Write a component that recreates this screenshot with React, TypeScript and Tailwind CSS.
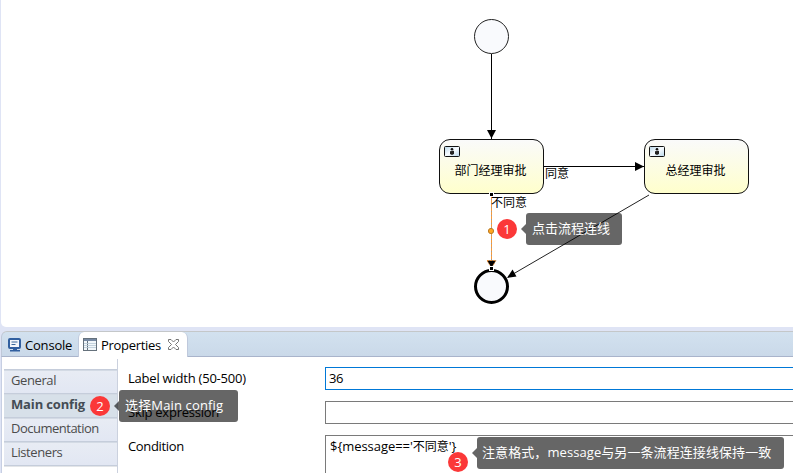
import React from 'react';

const latin = "font-['Open_Sans','Noto_Sans_CJK_SC',sans-serif]";
const cjk = "font-['Noto_Sans_CJK_SC',sans-serif]";

function UserIcon() {
  return (
    <svg width="16" height="11" viewBox="0 0 16 11" className="absolute left-[4px] top-[6px]">
      <defs>
        <linearGradient id="ic" x1="0" x2="1" y1="0" y2="1">
          <stop offset="0" stopColor="#b7d5e8" />
          <stop offset=".5" stopColor="#f8fcff" />
          <stop offset="1" stopColor="#b7d5e8" />
        </linearGradient>
      </defs>
      <rect x=".5" y=".5" width="15" height="10" rx="1" fill="url(#ic)" stroke="#111" />
      <circle cx="8" cy="3.3" r="1.3" fill="#111" />
      <path d="M6 5.3L10 4.8V7.5L9 8.8H7L6 7.5Z" fill="#222" />
    </svg>
  );
}

function Task({ name, place }: { name: string; place: string }) {
  return (
    <div
      className={`absolute top-[139px] h-[55px] w-[105px] rounded-[11px] border border-[#111] bg-linear-to-b from-[#fafafa] to-[#ffffcc] ${place}`}
    >
      <UserIcon />
      <div className={`pt-[21px] pr-[2px] text-center text-[12px] leading-[18px] text-black ${cjk}`}>{name}</div>
    </div>
  );
}

function Badge({ n, place }: { n: number; place: string }) {
  return (
    <div
      className={`absolute flex h-5 w-5 items-center justify-center rounded-full bg-[#fb3838] text-[13px] leading-none text-white ${latin} ${place}`}
    >
      {n}
    </div>
  );
}

function Tip({ place, children }: { place: string; children: React.ReactNode }) {
  return (
    <div className={`absolute h-8 rounded-[3px] bg-black/60 text-[13px] leading-[30px] whitespace-nowrap text-white ${latin} ${place}`}>
      <svg width="5" height="10" viewBox="0 0 5 10" className="absolute top-[11px] -left-[5px]">
        <path d="M5 0V10L0 5Z" fill="#000" fillOpacity=".6" />
      </svg>
      {children}
    </div>
  );
}

function Diagram() {
  return (
    <div className="relative ml-px h-[327px] shrink-0 overflow-hidden rounded-bl-[5px] bg-white">
      <div className="absolute top-0 -left-px h-[327px] w-[793px]">
        <svg width="793" height="327" className="absolute inset-0">
          <circle cx="491.5" cy="36.5" r="17" fill="#f9fafd" stroke="#222" />
          <path d="M491.5 54V139M544 166.5H644" stroke="#000" />
          <path d="M487 130H496L491.5 138.5ZM635 162V171L644 166.5Z" fill="#000" />
          <path d="M649 195L508 277" stroke="#222" fill="none" />
          <path d="M507 278L512.5 269.5L516.5 276.5Z" fill="#000" />
          <path d="M491.5 196V263" stroke="#a89c90" />
          <path d="M491.5 196V263" stroke="#f59a3c" strokeDasharray="3 1" />
          <path d="M487 260.500H496L491.5 268Z" fill="#000" stroke="#f28c28" strokeDasharray="2 1" strokeWidth=".8" />
          <circle cx="491.500" cy="286.500" r="16" fill="#f9fafd" stroke="#000" strokeWidth="3" />
          <rect x="489.500" y="266.500" width="4" height="4" fill="#000" stroke="#fff" />
          <circle cx="491" cy="231" r="2.600" fill="#ffa620" stroke="#ba7a24" />
        </svg>
        <Task name="部门经理审批" place="left-[439px]" />
        <Task name="总经理审批" place="left-[644px]" />
        <div className="absolute top-[192px] left-[489px] h-[5px] w-[5px] border border-white bg-black" />
        <div className={`absolute top-[164px] left-[545px] text-[12px] leading-[18px] ${cjk}`}>同意</div>
        <div className={`absolute top-[193px] left-[491px] text-[12px] leading-[18px] ${cjk}`}>不同意</div>
        <Badge n={1} place="left-[497px] top-[219px]" />
        <Tip place="left-[526px] top-[213px] w-[96px] pl-[6px]">点击流程连线</Tip>
      </div>
    </div>
  );
}

function TabBar() {
  return (
    <div className="flex h-[26px] shrink-0 rounded-tl-[6px] border-t border-b border-l border-t-[#c4c7c9] border-b-[#a9b4cb] border-l-[#bfc8d8] bg-linear-to-b from-[#d2e1ef] to-[#cad9e9]">
      <div className="flex h-[25px] w-[76px] pt-[6px] pl-[6px]">
        <svg width="14" height="14" viewBox="0 0 14 14">
          <rect x="1" y="1" width="11" height="9" rx="1" fill="#f4f7fb" stroke="#315f9f" strokeWidth="2" />
          <path d="M3.500 4H9.500M3.500 6.500H7.500" stroke="#3b689c" />
          <path d="M5 11H9V12H12V13.500H2V12H5Z" fill="#315f9f" />
        </svg>
        <span className="-mt-px ml-[3px] h-[16px] text-[13px] leading-[16px] tracking-[-0.2px]">Console</span>
      </div>
      <div className="flex h-[25px] w-[110px] rounded-t-[6px] border-x border-[#bfc9dc] bg-white pt-[6px] pl-[4px]">
        <svg width="14" height="14" viewBox="0 0 14 14">
          <rect x=".5" y=".5" width="13" height="12" fill="#f2f7fa" stroke="#65717c" />
          <path d="M1 2H13" stroke="#7689a3" strokeWidth="2" />
          <path d="M4.500 3V12" stroke="#65717c" />
          <path d="M1 5.500H13M1 7.500H13M1 9.500H13" stroke="#b6c8d5" strokeWidth=".8" />
        </svg>
        <span className="-mt-px ml-[4px] w-[61px] text-[13px] leading-[16px] tracking-[-0.3px]">Properties</span>
        <svg width="11" height="11" viewBox="0 0 11 11" className="mt-[1px] ml-[6px]">
          <path d="M.5.5H3L5.500 3L8 .5H10.500V2.500L7.500 5.500L10.500 8.500V10.500H8L5.500 8L3 10.500H.5V8.500L3.500 5.500L.5 2.500V.5Z" fill="#fff" stroke="#666" strokeWidth=".9" />
        </svg>
      </div>
    </div>
  );
}

function SideItem({ label, active, track }: { label: string; active?: boolean; track: string }) {
  return (
    <div
      className={`h-6 border-t border-[#c5cddb] pl-[7px] text-[13px] leading-[20px] shadow-[inset_0_1px_0_#d3dae4] ${track} ${
        active ? 'bg-[#d7e0e9] font-bold text-[#444c55]' : 'bg-linear-to-b from-[#e8ecf4] to-[#e2e7f3] text-[#4c4c4c]'
      }`}
    >
      {label}
    </div>
  );
}

function Field({ label, value, height, border, track }: { label: string; value: string; height: string; border: string; track: string }) {
  return (
    <div className={`flex items-start ${height}`}>
      <div className={`w-[197px] shrink-0 pt-[2px] text-[13px] leading-[18px] text-black ${track}`}>{label}</div>
      <div className={`h-[23px] grow border border-r-0 pl-[3px] text-[13px] leading-[21px] tracking-[-0.5px] ${border}`}>{value}</div>
    </div>
  );
}

function Properties() {
  return (
    <div className="flex h-[116px] border-l border-[#c7cfe3] bg-white">
      <div className="ml-[2px] w-[113px] pt-[12px]">
        <SideItem label="General" track="tracking-[-0.4px]" />
        <SideItem label="Main config" active track="tracking-[-0.15px]" />
        <SideItem label="Documentation" track="tracking-[-0.5px]" />
        <SideItem label="Listeners" track="tracking-[-0.4px]" />
        <div className="h-[2px] border-t border-[#c5cddb] bg-[#e3e5e8]" />
      </div>
      <div className="mt-[2px] flex grow flex-col border-l border-[#cbd1de] pt-[8px] pl-[10px]">
        <Field label="Label width (50-500)" value="36" height="h-[34px]" border="border-[#0078d7]" track="tracking-[-0.22px]" />
        <Field label="Skip expression" value="" height="h-[34px]" border="border-[#7a7a7a]" track="tracking-[-0.25px]" />
        <div className="flex grow">
          <div className="w-[197px] shrink-0 pt-[2px] text-[13px] leading-[18px] tracking-[-0.35px]">Condition</div>
          <div className="grow border-t border-l border-[#7a7a7a] pt-[1px] pl-[4px] text-[13px] leading-[18px]">
            <span className="tracking-[-0.05px]">{"${message=='"}</span>
            <span className="text-[12px]">不同意</span>
            {"'}"}
          </div>
        </div>
      </div>
    </div>
  );
}

export default function App() {
  return (
    <div className={`relative flex h-[473px] w-[793px] flex-col overflow-hidden bg-[#dfe4f5] text-black ${latin}`}>
      <Diagram />
      <div className="mt-1 ml-px flex flex-col">
        <TabBar />
        <Properties />
      </div>
      <Badge n={2} place="left-[90px] top-[396px]" />
      <Tip place="left-[119px] top-[390px] w-[119px] pl-[6px] tracking-[0.15px]">选择Main config</Tip>
      <Badge n={3} place="left-[448px] top-[452px]" />
      <Tip place="left-[477px] top-[437px] w-[307px] pl-[5px] tracking-[0.08px]">注意格式，message与另一条流程连接线保持一致</Tip>
    </div>
  );
}
